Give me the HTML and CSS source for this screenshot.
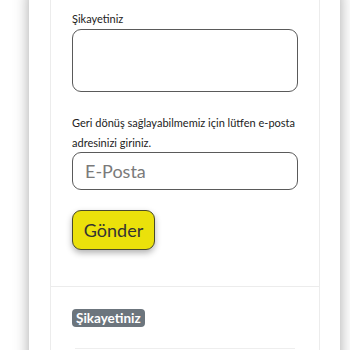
FILE: index.html
```html
<!DOCTYPE html>
<html lang="tr">
<head>
<meta charset="utf-8">
<link rel="stylesheet" href="styles.css">
</head>
<body>
<div class="page">
  <div class="card">
    <section class="form">
      <label class="label" for="t">Şikayetiniz</label>
      <textarea id="t" class="area"></textarea>
      <p class="hint">Geri dönüş sağlayabilmemiz için lütfen e-posta adresinizi giriniz.</p>
      <input class="email" type="text" placeholder="E-Posta">
      <button class="send" type="button">Gönder</button>
    </section>
    <section class="list">
      <span class="badge">Şikayetiniz</span>
      <div class="item"></div>
    </section>
  </div>
</div>
</body>
</html>
```
FILE: styles.css
```css
html, body {
  margin: 0;
  padding: 0;
  background: #fff;
  overflow: hidden;
  font-family: Lato, "Noto Sans", sans-serif;
  color: #222;
}
.page {
  margin-left: 29px;
  width: 311px;
  height: 400px;
  background: #fff;
  box-shadow: 0 0 14px rgba(0, 0, 0, 0.35);
}
.card {
  margin-left: 21px;
  width: 268px;
  margin-top: -10px;
  border: 1px solid #ececec;
  border-top: none;
  height: 420px;
}
.form {
  padding: 20px 21px 36px 21px;
  display: flex;
  flex-direction: column;
  align-items: flex-start;
  border-bottom: 1px solid #ececec;
}
.label {
  font-size: 11px;
  line-height: 17px;
  margin-bottom: 2px;
  color: #222;
}
.area {
  box-sizing: border-box;
  width: 226px;
  height: 63px;
  border: 1px solid #5a5a5a;
  border-radius: 9px;
  resize: none;
  margin: 0;
}
.hint {
  margin: 21px 0 0 0;
  width: 230px;
  font-size: 11px;
  line-height: 20px;
  color: #222;
}
.email {
  box-sizing: border-box;
  width: 226px;
  height: 38px;
  border: 1px solid #5a5a5a;
  border-radius: 9px;
  padding: 0 12px;
  font-family: inherit;
  font-size: 18px;
  margin: -1px 0 0 0;
}
.email::placeholder {
  color: #7a7a7a;
}
.send {
  margin-top: 20px;
  box-sizing: border-box;
  width: 83px;
  height: 40px;
  background: #ebe10b;
  border: 1px solid #4a4a2a;
  border-radius: 9px;
  font-family: inherit;
  font-size: 18px;
  color: #333;
  box-shadow: 0 3px 6px rgba(0, 0, 0, 0.3);
  padding: 0;
}
.list {
  padding: 22px 21px 0 21px;
  display: flex;
  flex-direction: column;
  align-items: flex-start;
}
.badge {
  background: #6c757d;
  color: #fff;
  font-weight: 700;
  font-size: 13.5px;
  line-height: 18px;
  padding: 0 4px;
  border-radius: 4px;
}
.item {
  margin: 21px 0 0 3px;
  width: 220px;
  height: 20px;
  border-top: 1px solid #eeeeee;
}
```
